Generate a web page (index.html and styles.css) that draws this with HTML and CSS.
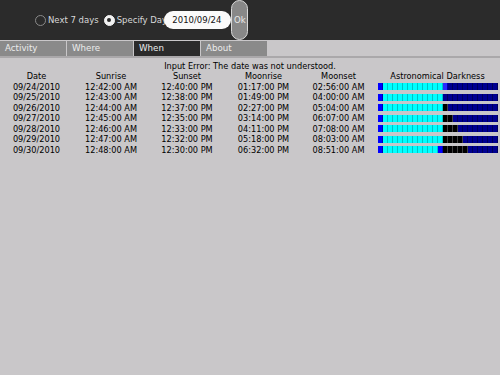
FILE: index.html
```html
<!DOCTYPE html>
<html>
<head>
<meta charset="utf-8">
<link rel="stylesheet" href="styles.css">
</head>
<body>
<div class="topbar">
  <label class="opt"><span class="radio"></span><span>Next 7 days</span></label>
  <label class="opt"><span class="radio on"></span><span>Specify Day:</span></label>
  <div class="datein">2010/09/24</div>
  <div class="okbtn">Ok</div>
</div>
<div class="tabs">
  <div class="tab">Activity</div>
  <div class="tab">Where</div>
  <div class="tab active">When</div>
  <div class="tab">About</div>
</div>
<div class="content">
  <div class="error">Input Error: The date was not understood.</div>
  <div class="grid">
    <div>Date</div><div>Sunrise</div><div>Sunset</div><div>Moonrise</div><div>Moonset</div><div>Astronomical Darkness</div>

    <div>09/24/2010</div><div>12:42:00 AM</div><div>12:40:00 PM</div><div>01:17:00 PM</div><div>02:56:00 AM</div>
    <div class="barcell"><div class="bar"><i class="b"></i><i class="c"></i><i class="c"></i><i class="c"></i><i class="c"></i><i class="c"></i><i class="c"></i><i class="c"></i><i class="c"></i><i class="c"></i><i class="c"></i><i class="c"></i><i class="c"></i><i class="b2"></i><i class="n"></i><i class="n"></i><i class="n"></i><i class="n"></i><i class="n"></i><i class="n"></i><i class="n"></i><i class="n"></i><i class="n"></i><i class="n"></i></div></div>

    <div>09/25/2010</div><div>12:43:00 AM</div><div>12:38:00 PM</div><div>01:49:00 PM</div><div>04:00:00 AM</div>
    <div class="barcell"><div class="bar"><i class="b"></i><i class="c"></i><i class="c"></i><i class="c"></i><i class="c"></i><i class="c"></i><i class="c"></i><i class="c"></i><i class="c"></i><i class="c"></i><i class="c"></i><i class="c"></i><i class="c"></i><i class="n"></i><i class="n"></i><i class="n"></i><i class="n"></i><i class="n"></i><i class="n"></i><i class="n"></i><i class="n"></i><i class="n"></i><i class="n"></i><i class="n"></i></div></div>

    <div>09/26/2010</div><div>12:44:00 AM</div><div>12:37:00 PM</div><div>02:27:00 PM</div><div>05:04:00 AM</div>
    <div class="barcell"><div class="bar"><i class="b"></i><i class="c"></i><i class="c"></i><i class="c"></i><i class="c"></i><i class="c"></i><i class="c"></i><i class="c"></i><i class="c"></i><i class="c"></i><i class="c"></i><i class="c"></i><i class="c"></i><i class="k"></i><i class="n"></i><i class="n"></i><i class="n"></i><i class="n"></i><i class="n"></i><i class="n"></i><i class="n"></i><i class="n"></i><i class="n"></i><i class="n"></i></div></div>

    <div>09/27/2010</div><div>12:45:00 AM</div><div>12:35:00 PM</div><div>03:14:00 PM</div><div>06:07:00 AM</div>
    <div class="barcell"><div class="bar"><i class="b"></i><i class="c"></i><i class="c"></i><i class="c"></i><i class="c"></i><i class="c"></i><i class="c"></i><i class="c"></i><i class="c"></i><i class="c"></i><i class="c"></i><i class="c"></i><i class="c"></i><i class="k"></i><i class="k"></i><i class="n"></i><i class="n"></i><i class="n"></i><i class="n"></i><i class="n"></i><i class="n"></i><i class="n"></i><i class="n"></i><i class="n"></i></div></div>

    <div>09/28/2010</div><div>12:46:00 AM</div><div>12:33:00 PM</div><div>04:11:00 PM</div><div>07:08:00 AM</div>
    <div class="barcell"><div class="bar"><i class="b"></i><i class="c"></i><i class="c"></i><i class="c"></i><i class="c"></i><i class="c"></i><i class="c"></i><i class="c"></i><i class="c"></i><i class="c"></i><i class="c"></i><i class="c"></i><i class="c"></i><i class="k"></i><i class="k"></i><i class="k"></i><i class="n"></i><i class="n"></i><i class="n"></i><i class="n"></i><i class="n"></i><i class="n"></i><i class="n"></i><i class="n"></i></div></div>

    <div>09/29/2010</div><div>12:47:00 AM</div><div>12:32:00 PM</div><div>05:18:00 PM</div><div>08:03:00 AM</div>
    <div class="barcell"><div class="bar"><i class="b"></i><i class="c"></i><i class="c"></i><i class="c"></i><i class="c"></i><i class="c"></i><i class="c"></i><i class="c"></i><i class="c"></i><i class="c"></i><i class="c"></i><i class="c"></i><i class="c"></i><i class="k"></i><i class="k"></i><i class="k"></i><i class="k"></i><i class="n"></i><i class="n"></i><i class="n"></i><i class="n"></i><i class="n"></i><i class="n"></i><i class="n"></i></div></div>

    <div>09/30/2010</div><div>12:48:00 AM</div><div>12:30:00 PM</div><div>06:32:00 PM</div><div>08:51:00 AM</div>
    <div class="barcell"><div class="bar"><i class="b"></i><i class="c"></i><i class="c"></i><i class="c"></i><i class="c"></i><i class="c"></i><i class="c"></i><i class="c"></i><i class="c"></i><i class="c"></i><i class="c"></i><i class="c"></i><i class="b"></i><i class="k"></i><i class="k"></i><i class="k"></i><i class="k"></i><i class="k"></i><i class="n"></i><i class="n"></i><i class="n"></i><i class="n"></i><i class="n"></i><i class="n"></i></div></div>
  </div>
</div>
</body>
</html>
```

FILE: styles.css
```css
html, body {
  margin: 0;
  padding: 0;
}
body {
  background: #c9c7c9;
  font-family: "DejaVu Sans", sans-serif;
  color: #000;
  width: 500px;
  height: 375px;
  overflow: hidden;
}
.topbar {
  height: 40px;
  background: #2b2b2b;
  display: flex;
  align-items: center;
  padding-left: 35px;
  color: #d8d8d8;
  font-size: 8.5px;
}
.opt {
  display: flex;
  align-items: center;
  gap: 2px;
  margin-right: 5px;
}
.radio {
  width: 9px;
  height: 9px;
  border: 1px solid #8a8a8a;
  border-radius: 50%;
  box-sizing: content-box;
  display: flex;
  align-items: center;
  justify-content: center;
}
.radio.on {
  background: #f2f2f2;
  border-color: #f2f2f2;
}
.radio.on::after {
  content: "";
  width: 4px;
  height: 4px;
  border-radius: 50%;
  background: #2b2b2b;
}
.datein {
  position: relative;
  margin-left: -10px;
  width: 59px;
  height: 18px;
  line-height: 18px;
  padding-left: 8px;
  background: #fafafa;
  border-radius: 9px;
  color: #111;
  font-size: 8.5px;
}
.okbtn {
  align-self: flex-start;
  width: 15px;
  height: 38px;
  border: 1px solid #d8d8d8;
  border-radius: 9px;
  background: #888;
  color: #e8e8e8;
  display: flex;
  align-items: center;
  justify-content: center;
  font-size: 8.5px;
}
.tabs {
  display: flex;
  height: 15px;
  margin-top: 1px;
}
.tab {
  width: 66px;
  margin-right: 1px;
  background: #8a8a8a;
  color: #ececec;
  font-size: 8.7px;
  line-height: 15px;
  padding-left: 5px;
  box-sizing: border-box;
}
.tab.active {
  background: #2b2b2b;
}
.content {
  border-top: 2px solid #aaa8aa;
  padding-top: 3px;
  font-size: 8.2px;
}
.error {
  text-align: center;
  line-height: 10px;
}
.grid {
  display: grid;
  grid-template-columns: 73px 76px 76px 77px 73px 1fr;
  grid-auto-rows: 10.5px;
  line-height: 10.5px;
  text-align: center;
}
.barcell {
  display: flex;
  align-items: center;
  justify-content: center;
}
.bar {
  display: flex;
  height: 7px;
}
.bar i {
  display: block;
  width: 5px;
  height: 7px;
}
.bar .b { background: #0000ff; box-shadow: inset -1px 0 0 #0000b0; }
.bar .b2 { background: #2a2aff; box-shadow: inset -1px 0 0 #0000b0; }
.bar .c { background: #00ffff; box-shadow: inset -1px 0 0 #00c4c4; }
.bar .n { background: #000090; box-shadow: inset -1px 0 0 #00005a; }
.bar .k { background: #000; box-shadow: inset -1px 0 0 #404040; }
```
